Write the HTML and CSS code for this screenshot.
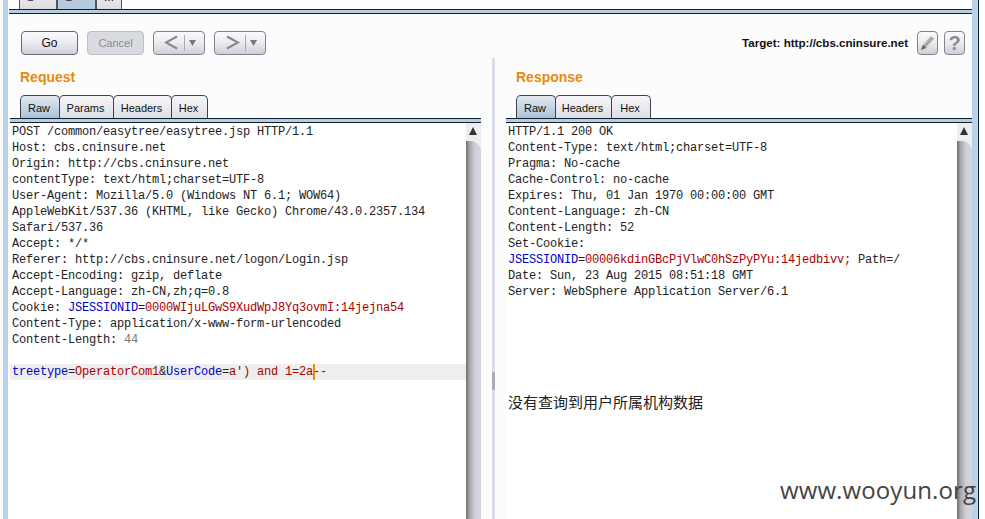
FILE: index.html
```html
<!DOCTYPE html>
<html lang="zh">
<head>
<meta charset="utf-8">
<title>Repeater</title>
<link rel="stylesheet" href="styles.css">
</head>
<body>
<div class="app">
  <div class="edge-left"></div>
  <main class="main">
    <div class="top-tabs">
      <div class="top-tab t1">1 ×</div>
      <div class="top-tab t2 on">2 ×</div>
      <div class="top-tab t3">...</div>
    </div>
    <div class="rule"></div>
    <div class="toolbar">
      <button class="btn go">Go</button>
      <button class="btn cancel">Cancel</button>
      <button class="btn nav"><svg width="50" height="22" viewBox="0 0 50 22"><path d="M23 4.500 L12 10.500 L23 16.500" fill="none" stroke="#888" stroke-width="2"/><path d="M30.500 3V19" stroke="#aaa"/><path d="M35 8h7l-3.500 6z" fill="#777"/></svg></button>
      <button class="btn nav"><svg width="50" height="22" viewBox="0 0 50 22"><path d="M12 4.500 L23 10.500 L12 16.500" fill="none" stroke="#888" stroke-width="2"/><path d="M30.500 3V19" stroke="#aaa"/><path d="M35 8h7l-3.500 6z" fill="#777"/></svg></button>
      <div class="target">Target: http://cbs.cninsure.net</div>
      <button class="btn icon"><svg width="19" height="22" viewBox="0 0 19 22"><path d="M3 18 L5 13 L13 4 L16 7 L8 16z" fill="#999"/><path d="M6 13 L13.500 5M8 15 L15 7" stroke="#eee" stroke-width="0.800"/><path d="M3 18l2-5 3 3z" fill="#666"/></svg></button>
      <button class="btn icon help">?</button>
    </div>
    <div class="split">
      <section class="pane pane-left">
        <h2 class="title">Request</h2>
        <div class="tabs">
          <div class="tab on w39">Raw</div>
          <div class="tab w54">Params</div>
          <div class="tab w58">Headers</div>
          <div class="tab w36">Hex</div>
        </div>
        <div class="rule"></div>
        <div class="editor-row">
          <div class="editor"><div class="line">POST /common/easytree/easytree.jsp HTTP/1.1</div><div class="line">Host: cbs.cninsure.net</div><div class="line">Origin: http://cbs.cninsure.net</div><div class="line">contentType: text/html;charset=UTF-8</div><div class="line">User-Agent: Mozilla/5.0 (Windows NT 6.1; WOW64)</div><div class="line">AppleWebKit/537.36 (KHTML, like Gecko) Chrome/43.0.2357.134</div><div class="line">Safari/537.36</div><div class="line">Accept: */*</div><div class="line">Referer: http://cbs.cninsure.net/logon/Login.jsp</div><div class="line">Accept-Encoding: gzip, deflate</div><div class="line">Accept-Language: zh-CN,zh;q=0.8</div><div class="line">Cookie: <span class="k">JSESSIONID</span>=<span class="v">0000WIjuLGwS9XudWpJ8Yq3ovmI:14jejna54</span></div><div class="line">Content-Type: application/x-www-form-urlencoded</div><div class="line">Content-Length: <span class="n">44</span></div><div class="line">&nbsp;</div><div class="line cur-line"><span class="k">treetype</span>=<span class="v">OperatorCom1</span>&amp;<span class="k">UserCode</span>=<span class="v">a') and 1=2a<span class="caret"></span>--</span></div></div>
          <div class="scrollbar"><div class="arrow"></div><div class="thumb"></div></div>
        </div>
      </section>
      <div class="divider"><div class="grip"></div></div>
      <section class="pane pane-right">
        <h2 class="title">Response</h2>
        <div class="tabs">
          <div class="tab on w39">Raw</div>
          <div class="tab w56">Headers</div>
          <div class="tab w39">Hex</div>
        </div>
        <div class="rule"></div>
        <div class="editor-row">
          <div class="editor"><div class="line">HTTP/1.1 200 OK</div><div class="line">Content-Type: text/html;charset=UTF-8</div><div class="line">Pragma: No-cache</div><div class="line">Cache-Control: no-cache</div><div class="line">Expires: Thu, 01 Jan 1970 00:00:00 GMT</div><div class="line">Content-Language: zh-CN</div><div class="line">Content-Length: 52</div><div class="line">Set-Cookie:</div><div class="line"><span class="k">JSESSIONID</span>=<span class="v">00006kdinGBcPjVlwC0hSzPyPYu:14jedbivv;</span> Path=/</div><div class="line">Date: Sun, 23 Aug 2015 08:51:18 GMT</div><div class="line">Server: WebSphere Application Server/6.1</div><div class="line">&nbsp;</div><div class="line">&nbsp;</div><div class="line">&nbsp;</div><div class="line">&nbsp;</div><div class="line">&nbsp;</div><div class="line">&nbsp;</div><div class="line cjk">没有查询到用户所属机构数据</div></div>
          <div class="scrollbar"><div class="arrow"></div><div class="thumb"></div></div>
        </div>
      </section>
    </div>
  </main>
  <div class="edge-right"></div>
  <div class="watermark">www.wooyun.org</div>
</div>
</body>
</html>
```
FILE: styles.css
```css
* { box-sizing: border-box; }
html, body { margin: 0; padding: 0; height: 100%; overflow: hidden; background: #fff; }
.app { display: flex; height: 519px; width: 985px; position: relative; font-family: "Liberation Sans", Arial, sans-serif; color: #111; }
.edge-left { width: 9px; flex: none; background: #b9d1ea; border-left: 3px solid #fff; border-right: 1px solid #fff; box-shadow: inset 1px 0 0 #b9d1ea; }
.edge-right { width: 13px; flex: none; background: #fff; border-left: 6px solid #b9d1ea; }
.edge-right::before { content: ""; display: block; width: 1px; height: 100%; background: #12232f; }
.main { flex: 1; min-width: 0; display: flex; flex-direction: column; background: #fcfcfc; }

.top-tabs { height: 9px; flex: none; display: flex; align-items: flex-end; overflow: hidden; padding-left: 10px; background: #fff; }
.top-tab { flex: none; height: 22px; font-size: 12px; line-height: 18px; word-spacing: 5px; text-align: center; color: #54406a; background: linear-gradient(#f2f2f4, #dcdce2); border: 1px solid #555; border-bottom: 0; }
.top-tab.t1 { width: 38px; }
.top-tab.t2 { width: 39px; }
.top-tab.t3 { width: 26px; color: #222; }
.top-tab.on { background: #b6cbdd; }

.rule { height: 5px; flex: none; background: #b7cde2; border-top: 1px solid #10202e; border-bottom: 1px solid #10202e; }

.toolbar { height: 44px; flex: none; display: flex; align-items: flex-start; padding: 17px 7px 0 12px; }
.btn { height: 24px; flex: none; padding: 0; margin: 0; border: 1px solid #666a70; border-radius: 4px; background: linear-gradient(#fafafc 0%, #eceef2 45%, #cdd0d9 100%); font: 400 11px "Liberation Sans", Arial, sans-serif; color: #111; display: flex; align-items: center; justify-content: center; }
.go { width: 57px; margin-right: 9px; font-size: 12px; }
.cancel { width: 57px; margin-right: 9px; color: #8b8f96; border-color: #bcc0c6; background: #d9dbe0; }
.nav { width: 52px; margin-right: 9px; border-color: #80848a; }
.target { margin-left: auto; margin-right: 9px; font-size: 11.600px; font-weight: 700; line-height: 24px; white-space: nowrap; color: #111; }
.icon { width: 21px; margin-right: 6px; border-color: #80848a; }
.icon:last-child { margin-right: 0; }
.help { font-size: 20px; font-weight: 700; color: #8b8b8b; }

.split { flex: 1; min-height: 0; display: flex; }
.pane { display: flex; flex-direction: column; min-width: 0; }
.pane-left { width: 483px; flex: none; padding: 0 11px 0 1px; }
.pane-right { flex: 1; padding-left: 11px; }
.divider { width: 3px; flex: none; background: #d8dce8; padding-top: 314px; }
.grip { height: 18px; background: #a9adb6; border-radius: 1px; }

.title { margin: 11px 0 0 10px; height: 26px; font-size: 14px; font-weight: 700; line-height: 16px; color: #e8890c; }
.tabs { height: 23px; flex: none; display: flex; padding-left: 10px; }
.tab { flex: none; padding-right: 2px; font-size: 11px; line-height: 24px; text-align: center; color: #111; background: linear-gradient(#f6f6f8, #dfe0e6); border: 1px solid #3c4650; border-bottom: 0; border-radius: 5px 5px 0 0; margin-right: -1px; }
.tab.on { background: linear-gradient(#e4e9ef, #a9c3d8); }
.w39 { width: 40px; }
.w54 { width: 55px; }
.w58 { width: 59px; }
.w36 { width: 37px; }
.w56 { width: 57px; }

.editor-row { flex: 1; min-height: 0; display: flex; background: #fff; }
.editor { flex: 1; min-width: 0; padding: 1px 0 0 2px; overflow: hidden; font-family: "Liberation Mono", "Courier New", monospace; font-size: 12px; letter-spacing: -0.200px; line-height: 16px; color: #222; background: #fff; }
.line { height: 16px; white-space: pre; }
.cur-line { background: #eeeeee; margin-left: -2px; padding-left: 2px; }
.k { color: #0000c8; }
.v { color: #a80000; }
.n { color: #777; }
.caret { display: inline-block; width: 2px; height: 16px; background: #ee8800; vertical-align: top; margin-right: -2px; }
.cjk { font-family: "Noto Sans CJK SC", sans-serif; font-size: 15px; line-height: 12px; letter-spacing: 0; color: #222; }

.scrollbar { width: 15px; flex: none; display: flex; flex-direction: column; background: #f0f0f2; }
.arrow { height: 18px; flex: none; background: #eeeef0; }
.arrow::after { content: ""; display: block; width: 0; height: 0; margin: 4px 0 0 3px; border-left: 4px solid transparent; border-right: 4px solid transparent; border-bottom: 8px solid #333; }
.thumb { flex: 1; border-radius: 0 10px 0 0; background: linear-gradient(90deg, #6f6f6f 0%, #a8a8ae 25%, #cfd0d8 60%, #d4d5dd 100%); }

.watermark { position: absolute; left: 780px; top: 473px; font-family: "Open Sans", sans-serif; font-size: 24px; line-height: 33px; color: #444; white-space: nowrap; letter-spacing: 0.100px; }
```
